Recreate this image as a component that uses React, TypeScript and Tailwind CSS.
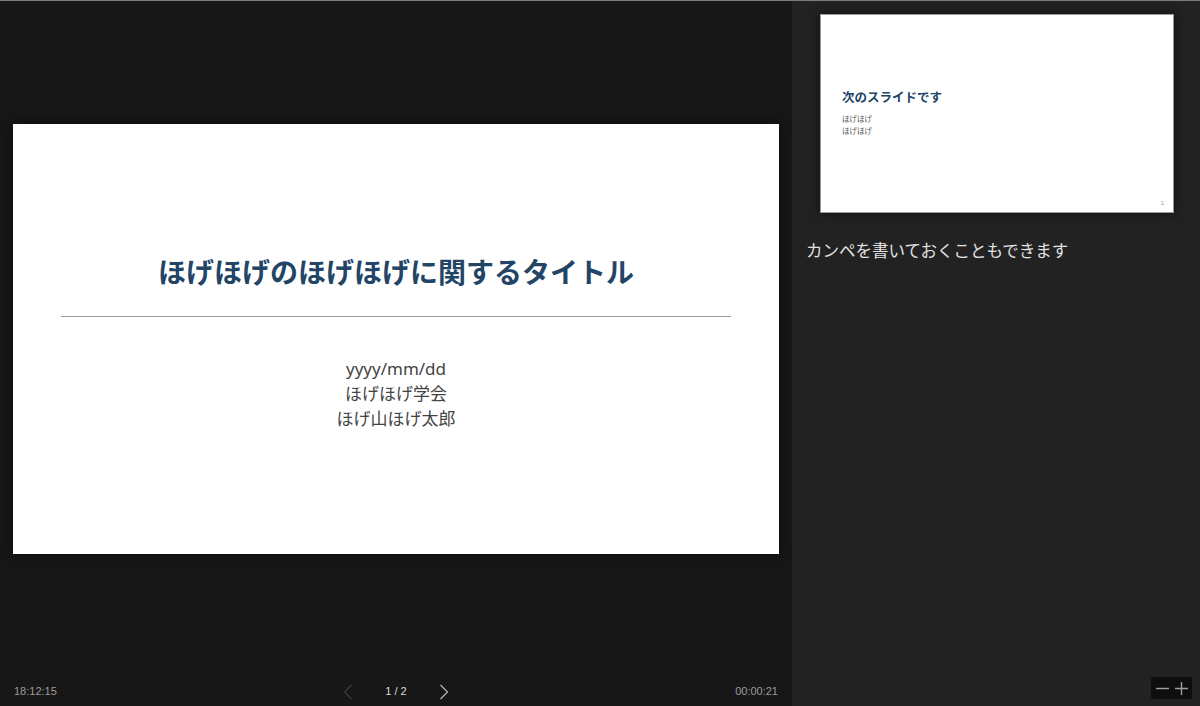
const jp = "font-['Noto_Sans','Noto_Sans_CJK_JP',sans-serif]";

function ChevronLeft({ className }: { className?: string }) {
  return (
    <svg width="10" height="16" viewBox="0 0 10 16" className={className} fill="none">
      <path d="M8.5 1 L1.5 8 L8.5 15" stroke="currentColor" strokeWidth="1.2" />
    </svg>
  );
}

function ChevronRight({ className }: { className?: string }) {
  return (
    <svg width="10" height="16" viewBox="0 0 10 16" className={className} fill="none">
      <path d="M1.5 1 L8.5 8 L1.5 15" stroke="currentColor" strokeWidth="1.2" />
    </svg>
  );
}

function CurrentSlide() {
  return (
    <div className="flex h-[430px] w-[766px] flex-col items-center justify-center bg-white px-[48px] pt-[6px] shadow-[0_0_12px_rgba(0,0,0,0.6)]">
      <h1 className={`${jp} text-[28px] font-bold leading-[36px] text-[#224466]`}>
        ほげほげのほげほげに関するタイトル
      </h1>
      <div className="mt-[26px] h-px w-full bg-[#9a9a9a]" />
      <div className={`${jp} mt-[39px] text-center text-[17px] leading-[25px] text-[#444]`}>
        <p>yyyy/mm/dd</p>
        <p>ほげほげ学会</p>
        <p>ほげ山ほげ太郎</p>
      </div>
    </div>
  );
}

function NextSlide() {
  return (
    <div className="relative flex h-[199px] w-[354px] flex-col justify-center border border-[#9a9a9a] bg-white px-[21px] shadow-[0_0_10px_rgba(0,0,0,0.6)]">
      <h2 className={`${jp} text-[12.5px] font-bold leading-[16px] text-[#224466]`}>次のスライドです</h2>
      <div className={`${jp} mt-[7px] text-[7.5px] leading-[12px] text-[#555]`}>
        <p>ほげほげ</p>
        <p>ほげほげ</p>
      </div>
      <span className="absolute bottom-[4px] right-[9px] font-['Liberation_Sans',sans-serif] text-[6px] text-[#999]">1</span>
    </div>
  );
}

export default function App() {
  return (
    <div className="flex h-[706px] w-[1200px] overflow-hidden border-t border-[#7c7c7c]">
      <div className="flex w-[792px] flex-col bg-[#171717]">
        <div className="flex flex-1 items-center justify-center">
          <CurrentSlide />
        </div>
        <div className="flex h-[29px] items-center justify-between px-[14px] font-['Liberation_Sans',sans-serif] text-[11px] text-[#9b9b9b]">
          <span>18:12:15</span>
          <div className="flex items-center">
            <ChevronLeft className="text-[#3d3d3d]" />
            <span className="mx-[32px] text-[#dcdcdc]">1 / 2</span>
            <ChevronRight className="text-[#b5b5b5]" />
          </div>
          <span>00:00:21</span>
        </div>
      </div>
      <div className="flex flex-1 flex-col bg-[#222222]">
        <div className="pl-[28px] pt-[13px]">
          <NextSlide />
        </div>
        <p className={`${jp} flex-1 px-[14px] pt-[26px] text-[16.5px] leading-[24px] text-[#e2e2e2]`}>
          カンペを書いておくこともできます
        </p>
        <div className="flex justify-end pb-[7px] pr-[8px]">
          <div className="flex h-[22px] w-[41px] items-center justify-center gap-[4px] rounded-[2px] bg-[#0e0e0e]">
            <svg width="15" height="15" viewBox="0 0 15 15" fill="none">
              <path d="M1 7.5 H14" stroke="#9e9e9e" strokeWidth="1.4" />
            </svg>
            <svg width="15" height="15" viewBox="0 0 15 15" fill="none">
              <path d="M1 7.5 H14 M7.5 1 V14" stroke="#9e9e9e" strokeWidth="1.4" />
            </svg>
          </div>
        </div>
      </div>
    </div>
  );
}
